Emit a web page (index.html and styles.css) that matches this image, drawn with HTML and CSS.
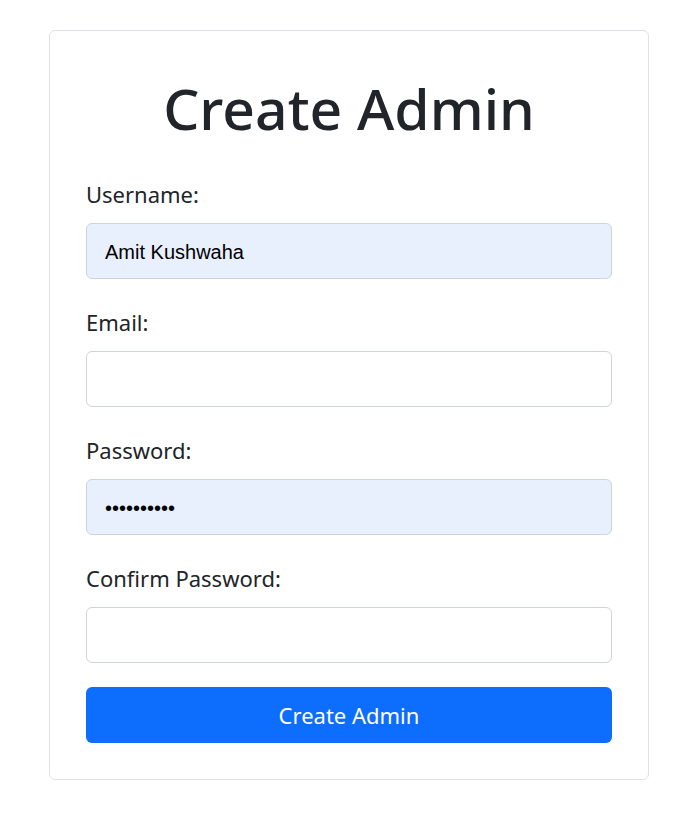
FILE: index.html
```html
<!DOCTYPE html>
<html>
<head>
<meta charset="utf-8">
<link rel="stylesheet" href="styles.css">
</head>
<body>
<div class="card">
  <h1 class="title">Create Admin</h1>
  <form class="form">
    <div class="group">
      <label class="label">Username:</label>
      <input class="input autofill" type="text" value="Amit Kushwaha">
    </div>
    <div class="group">
      <label class="label">Email:</label>
      <input class="input" type="email" value="">
    </div>
    <div class="group">
      <label class="label">Password:</label>
      <input class="input autofill" type="password" value="0123456789">
    </div>
    <div class="group group-last">
      <label class="label">Confirm Password:</label>
      <input class="input" type="password" value="">
    </div>
    <button class="btn" type="button">Create Admin</button>
  </form>
</div>
</body>
</html>
```
FILE: styles.css
```css
* { box-sizing: border-box; }
html, body { margin: 0; padding: 0; background: #fff; }
body {
  font-family: "Noto Sans", "Open Sans", sans-serif;
  color: #212529;
  padding-top: 30px;
}
.card {
  width: 600px;
  margin-left: 49px;
  border: 1px solid #dee2e6;
  border-radius: 6px;
  padding: 42px 36px 36px 36px;
}
.title {
  margin: 0 0 35px 0;
  text-align: center;
  font-size: 57px;
  font-weight: 500;
  line-height: 70px;
}
.form { display: flex; flex-direction: column; }
.group { display: flex; flex-direction: column; margin-bottom: 27px; }
.group-last { margin-bottom: 24px; }
.label {
  font-size: 22px;
  line-height: 33px;
  margin-bottom: 12px;
}
.input {
  height: 56px;
  border: 1px solid #ced4da;
  border-radius: 6px;
  padding: 3px 18px 0 18px;
  font-family: "Liberation Sans", Arial, sans-serif;
  font-size: 20px;
  color: #000;
  background: #fff;
  outline: none;
}
.input.autofill { background: #e8f0fe; }
.btn {
  height: 56px;
  border: none;
  border-radius: 6px;
  background: #0d6efd;
  color: #fff;
  font-family: "Noto Sans", "Open Sans", sans-serif;
  font-size: 22px;
  padding: 0;
}
```
